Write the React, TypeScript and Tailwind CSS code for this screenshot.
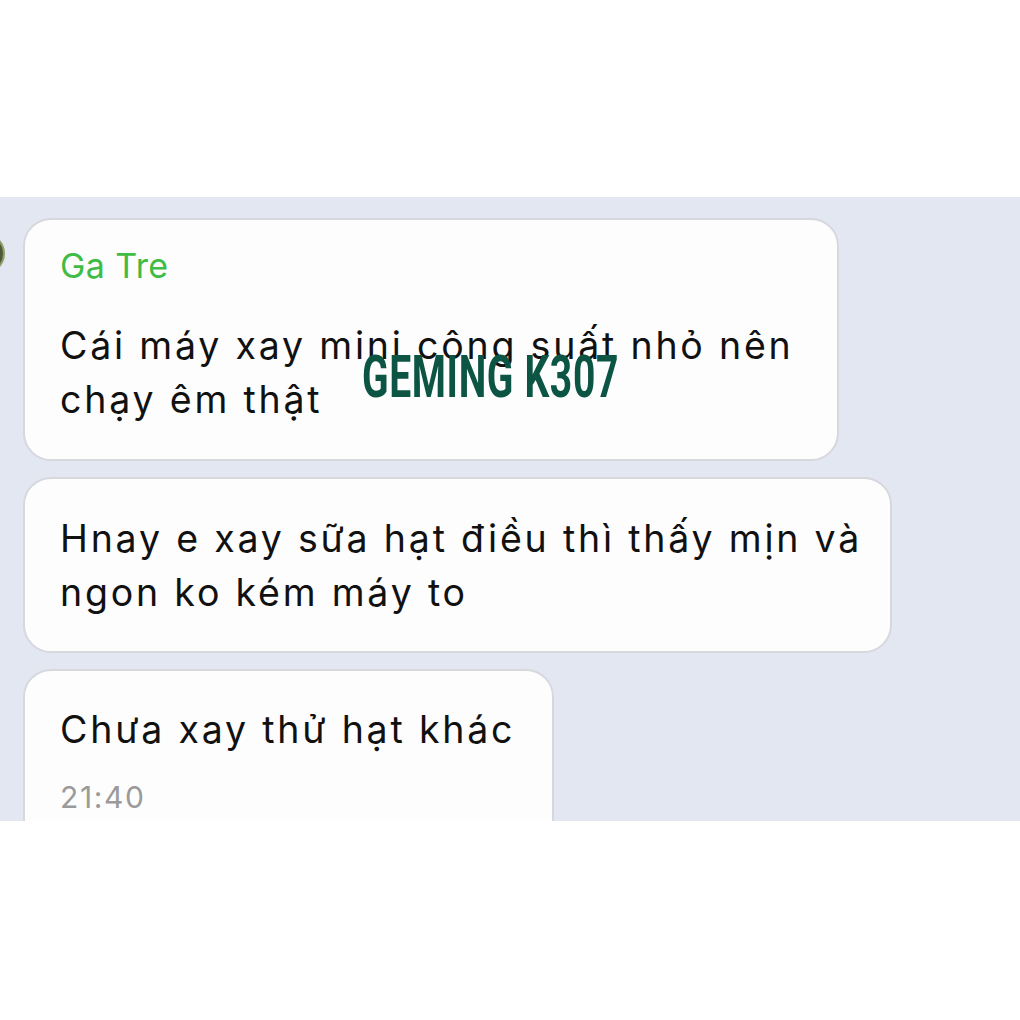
import React from "react";

export default function App() {
  return (
    <div className="w-[1020px] h-[1020px] bg-white flex flex-col overflow-hidden" style={{ fontFamily: "Inter, 'Liberation Sans', sans-serif" }}>
      <div className="h-[197px] shrink-0 bg-white" />
      <div className="relative h-[624px] shrink-0 bg-[#e3e7f1] overflow-hidden pl-[23px] pt-[21px] flex flex-col gap-[16px]">
        <div className="absolute left-[-36px] top-[36px] w-[41px] h-[41px] rounded-full bg-[#4d5a3a] border-2 border-[#8fa06a]" />
        <div className="relative w-[816px] h-[243px] shrink-0 rounded-[28px] border-2 border-[#d6d8de] bg-[#fdfdfd] pl-[35px] pt-[26px]">
          <div className="text-[34px] leading-[40px] text-[#3fbc46] tracking-[0.4px]">Ga Tre</div>
          <div className="mt-[33px] text-[37.5px] leading-[54px] text-[#111111] w-[760px] tracking-[2.8px]">
            Cái máy xay mini công suất nhỏ nên chạy êm thật
          </div>
          <div
            className="absolute left-[337px] top-[127px] text-[60px] leading-[60px] font-bold text-[#0c5443] scale-x-[0.65] origin-left tracking-[1px]"
            style={{ fontFamily: "Roboto, 'Liberation Sans', sans-serif" }}
          >
            GEMING K307
          </div>
        </div>
        <div className="w-[869px] h-[176px] shrink-0 rounded-[28px] border-2 border-[#d6d8de] bg-[#fdfdfd] pl-[35px] pt-[33px]">
          <div className="text-[37.5px] leading-[54px] text-[#111111] w-[820px] tracking-[2.8px]">
            Hnay e xay sữa hạt điều thì thấy mịn và ngon ko kém máy to
          </div>
        </div>
        <div className="w-[531px] h-[200px] shrink-0 rounded-[28px] border-2 border-[#d6d8de] bg-[#fdfdfd] pl-[35px] pt-[32px]">
          <div className="text-[37.5px] leading-[54px] text-[#111111] tracking-[2.8px]">Chưa xay thử hạt khác</div>
          <div className="mt-[22px] text-[30px] leading-[36px] text-[#9a9a9a] tracking-[1.6px]">21:40</div>
        </div>
      </div>
      <div className="flex-1 bg-white" />
    </div>
  );
}
